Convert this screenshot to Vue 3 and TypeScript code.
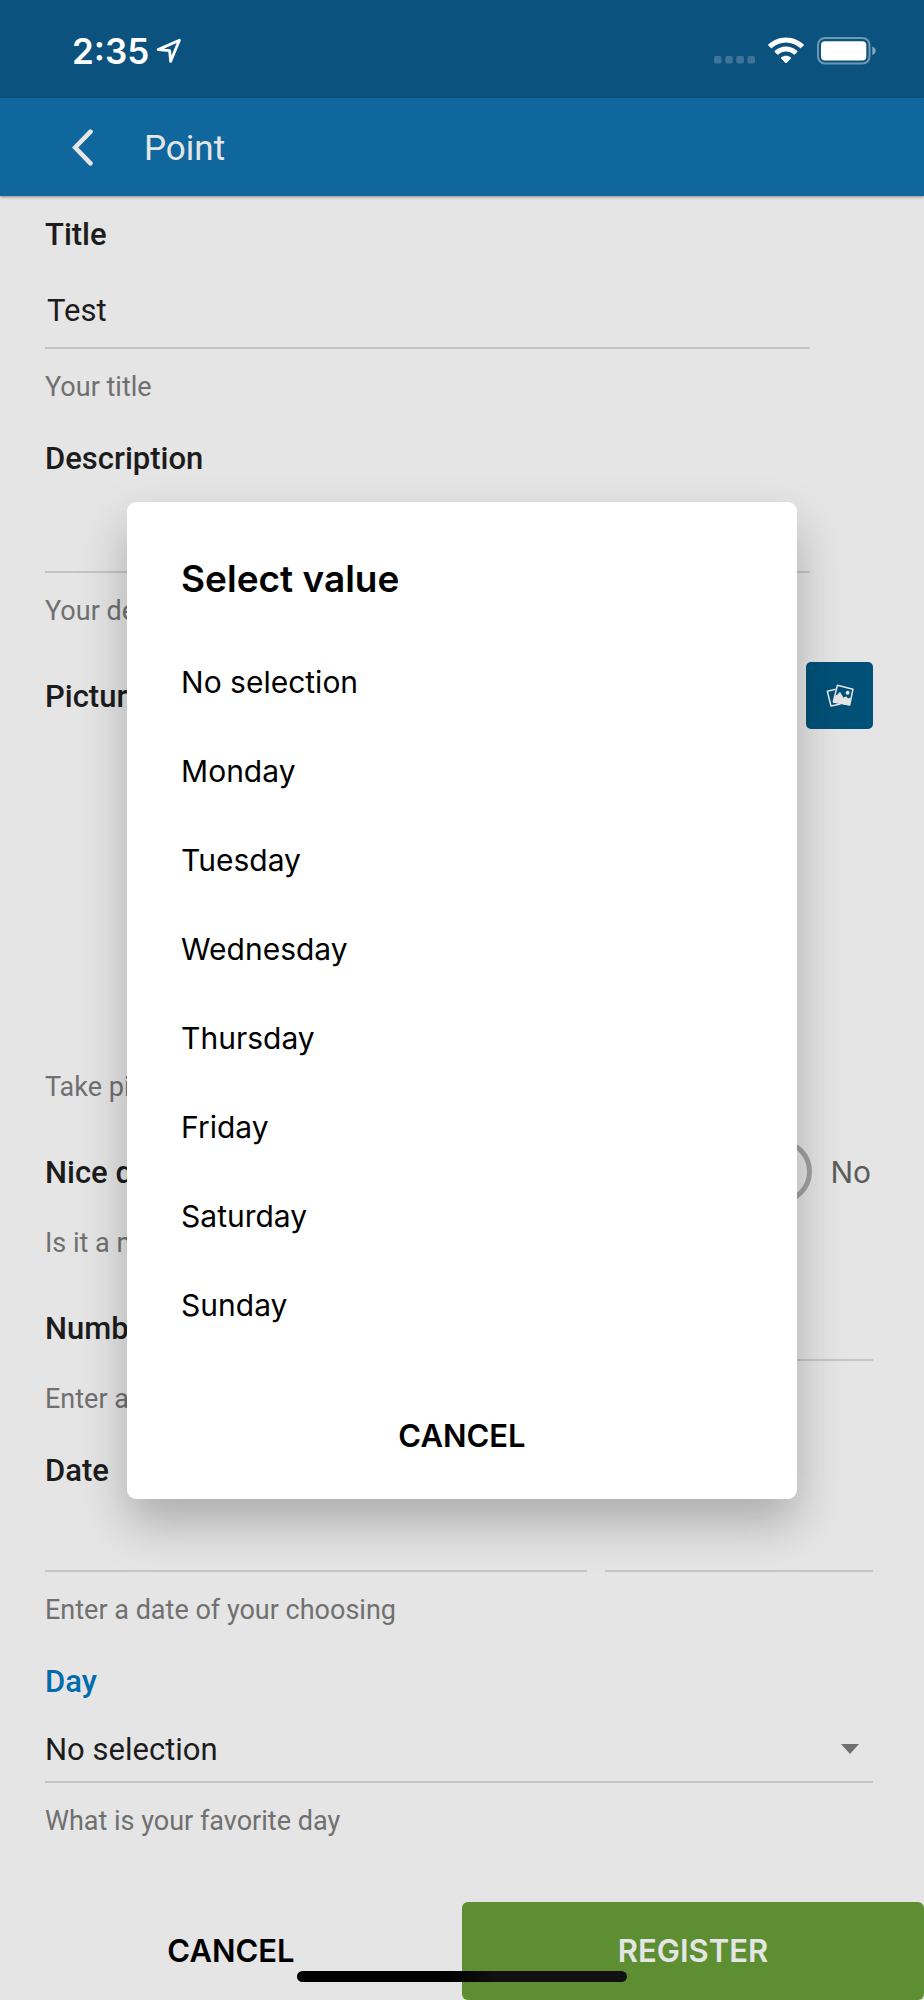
<script setup lang="ts">
import { ref } from 'vue'

const title = ref('Test')
const description = ref('')
const niceDay = ref(false)
const amount = ref('')
const date = ref('')
const time = ref('')
const day = ref('No selection')
const dialogOpen = ref(true)

const options: string[] = [
  'No selection',
  'Monday',
  'Tuesday',
  'Wednesday',
  'Thursday',
  'Friday',
  'Saturday',
  'Sunday',
]

function choose(option: string): void {
  day.value = option
  dialogOpen.value = false
}
</script>

<template>
  <div class="screen">
    <div class="status-bar">
      <span class="clock">2:35</span>
      <svg class="location" width="26" height="26" viewBox="0 0 26 26" aria-hidden="true">
        <path d="M2.2 11.6 L23.4 2.2 L14.6 23.4 L13.6 12.6 Z" fill="none" stroke="#fff" stroke-width="2.8" stroke-linejoin="round" />
      </svg>
      <div class="indicators">
        <svg width="41" height="27" viewBox="0 0 41 27" aria-hidden="true">
          <g fill="#3f7498">
            <rect x="0" y="19" width="7.6" height="7.6" rx="2" />
            <rect x="11.2" y="19" width="7.6" height="7.6" rx="2" />
            <rect x="22.3" y="19" width="7.6" height="7.6" rx="2" />
            <rect x="33.4" y="19" width="7.6" height="7.6" rx="2" />
          </g>
        </svg>
        <svg width="36" height="27" viewBox="0 0 36 27" aria-hidden="true">
          <g fill="#fff">
            <path d="M18 0.4 C11 0.4 4.800 3.200 0.300 7.500 Q-0.100 8 0.300 8.500 L2.900 11.100 Q3.400 11.600 3.900 11.100 C7.700 7.600 12.600 5.500 18 5.500 S28.300 7.600 32.100 11.100 Q32.600 11.600 33.100 11.100 L35.700 8.500 Q36.100 8 35.700 7.500 C31.200 3.200 25 0.400 18 0.400 Z" />
            <path d="M18 9.500 C13.700 9.500 9.800 11.100 6.700 13.900 Q6.200 14.400 6.700 14.900 L9.300 17.500 Q9.800 17.900 10.300 17.500 C12.400 15.700 15.100 14.600 18 14.600 S23.600 15.700 25.700 17.500 Q26.200 17.900 26.700 17.500 L29.300 14.900 Q29.800 14.400 29.300 13.900 C26.200 11.100 22.300 9.500 18 9.500 Z" />
            <path d="M18 18.700 C16.200 18.700 14.500 19.300 13.100 20.400 Q12.600 20.900 13.100 21.400 L17.500 25.900 Q18 26.300 18.500 25.900 L22.900 21.400 Q23.400 20.900 22.900 20.400 C21.500 19.300 19.800 18.700 18 18.700 Z" />
          </g>
        </svg>
        <svg width="59" height="28" viewBox="0 0 59 28" aria-hidden="true">
          <rect x="1" y="1" width="51.500" height="25.500" rx="7" fill="none" stroke="#6d97b2" stroke-width="2" />
          <rect x="4" y="4.200" width="45.300" height="19.200" rx="4" fill="#fff" />
          <path d="M55.300 9.500 C57.500 10.300 58.700 12 58.700 13.800 S57.500 17.300 55.300 18.100 Z" fill="#85a8be" />
        </svg>
      </div>
    </div>

    <header class="app-bar">
      <button class="back" type="button" aria-label="Back">
        <svg width="22" height="37" viewBox="0 0 22 37" aria-hidden="true">
          <path d="M18.500 2.700 L3.200 18.500 L18.500 34.300" fill="none" stroke="#e5e5e5" stroke-width="4.600" stroke-linecap="round" stroke-linejoin="miter" />
        </svg>
      </button>
      <h1>Point</h1>
    </header>

    <form class="form" @submit.prevent>
      <div class="field">
        <label class="label" for="title">Title</label>
        <input id="title" v-model="title" class="line-input text" type="text" />
        <p class="hint">Your title</p>
      </div>

      <div class="field">
        <label class="label" for="description">Description</label>
        <input id="description" v-model="description" class="line-input text" type="text" />
        <p class="hint">Your description</p>
      </div>

      <div class="field compact">
        <div class="row">
          <span class="label">Pictures</span>
          <button class="picture-button" type="button" aria-label="Add pictures">
            <svg width="28" height="24" viewBox="0 0 28 24" aria-hidden="true">
              <path d="M9.500 5.200 L1.300 7.300 L5 22 L14.500 19.900" fill="none" stroke="#e5e5e5" stroke-width="1.500" stroke-linejoin="round" />
              <path d="M11.400 1.300 L27 5.200 L23.700 21 L7.300 18 Z" fill="#005077" stroke="#e5e5e5" stroke-width="1.500" stroke-linejoin="round" />
              <path d="M7 18.500 L9.300 11.400 L11.500 10.400 L14 7.800 L17.500 13.700 L20 12.300 L22 14.500 L24.500 13.500 L23.700 21.200 Z" fill="#e5e5e5" />
              <circle cx="21.600" cy="8.700" r="2" fill="#e5e5e5" />
            </svg>
          </button>
        </div>
        <div class="gallery"></div>
        <p class="hint">Take pictures</p>
      </div>

      <div class="field compact">
        <div class="row">
          <label class="label" for="nice">Nice day</label>
          <div class="switch">
            <input id="nice" v-model="niceDay" type="checkbox" />
            <span class="switch-text">No</span>
          </div>
        </div>
        <p class="hint">Is it a nice day</p>
      </div>

      <div class="field compact">
        <div class="row">
          <label class="label" for="number">Number</label>
          <input id="number" v-model="amount" class="line-input number" type="text" inputmode="numeric" />
        </div>
        <p class="hint">Enter a number</p>
      </div>

      <div class="field">
        <label class="label" for="date">Date</label>
        <div class="date-row">
          <input id="date" v-model="date" class="line-input" type="text" />
          <input v-model="time" class="line-input" type="text" aria-label="Time" />
        </div>
        <p class="hint">Enter a date of your choosing</p>
      </div>

      <div class="field">
        <label class="label active" for="day">Day</label>
        <div class="select-wrap">
          <select id="day" v-model="day" @mousedown.prevent="dialogOpen = true">
            <option v-for="option in options" :key="option">{{ option }}</option>
          </select>
          <svg width="18" height="10" viewBox="0 0 18 10" aria-hidden="true">
            <path d="M0 0 H18 L9 10 Z" fill="#707070" />
          </svg>
        </div>
        <p class="hint">What is your favorite day</p>
      </div>
    </form>

    <footer class="footer">
      <button class="action" type="button">CANCEL</button>
      <button class="action primary" type="button">REGISTER</button>
      <span class="home-indicator"></span>
    </footer>

    <div v-if="dialogOpen" class="overlay">
      <section class="dialog" role="dialog" aria-modal="true" aria-labelledby="dialog-title">
        <h2 id="dialog-title">Select value</h2>
        <ul>
          <li v-for="option in options" :key="option">
            <button class="option" type="button" @click="choose(option)">{{ option }}</button>
          </li>
        </ul>
        <button class="action" type="button" @click="dialogOpen = false">CANCEL</button>
      </section>
    </div>
  </div>
</template>

<style>
html,
body {
  background: #e5e5e5;
}
</style>

<style scoped>
* {
  box-sizing: border-box;
}

.screen {
  position: relative;
  display: flex;
  flex-direction: column;
  min-height: 100vh;
  background: #e5e5e5;
  color: #1c1c1c;
  font-family: Roboto, "Liberation Sans", sans-serif;
}

button,
input,
select {
  margin: 0;
  padding: 0;
  border: 0;
  border-radius: 0;
  outline: 0;
  background: none;
  color: inherit;
  font: inherit;
  appearance: none;
}

h1,
h2,
p,
ul {
  margin: 0;
  padding: 0;
}

svg {
  display: block;
  flex: none;
}

.status-bar {
  display: flex;
  align-items: center;
  height: 98px;
  padding: 3px 48px 0 72px;
  background: #0b527e;
  color: #fff;
}

.clock {
  font: 600 35px/42px Inter, sans-serif;
}

.location {
  margin-left: 7px;
}

.indicators {
  display: flex;
  align-items: center;
  gap: 13px;
  margin-left: auto;
}

.app-bar {
  display: flex;
  align-items: center;
  gap: 50px;
  height: 98px;
  padding-left: 72px;
  background: #10679d;
  box-shadow: 0 1px 3px rgba(0, 0, 0, 0.4);
  color: #e5e5e5;
}

h1 {
  padding-top: 4px;
  font-size: 35px;
  font-weight: 400;
  line-height: 42px;
}

.form {
  flex: 1;
  padding: 21px 51px 65px 45px;
}

.field + .field {
  margin-top: 38px;
}

.field + .field.compact {
  margin-top: 35px;
}

.label {
  display: block;
  font-size: 31px;
  font-weight: 500;
  line-height: 36px;
}

.row .label {
  padding-top: 2px;
}

.label.active {
  color: #006cad;
}

.hint {
  margin-top: 22px;
  color: #707070;
  font-size: 27px;
  line-height: 32px;
}

.line-input {
  display: block;
  width: 100%;
  min-width: 0;
  height: 76px;
  padding: 0 2px;
  border-bottom: 2px solid #c6c6c6;
  font-size: 31px;
}

.line-input.text {
  width: calc(100% - 63px);
  margin-top: 20px;
}

.line-input.number {
  flex: 1;
  height: 67px;
}

.row {
  display: flex;
  align-items: center;
  justify-content: space-between;
  gap: 36px;
  height: 67px;
}

.picture-button {
  display: grid;
  place-items: center;
  width: 67px;
  height: 67px;
  border-radius: 5px;
  background: #005077;
}

.gallery {
  height: 320px;
}

.switch {
  display: flex;
  align-items: center;
  gap: 18px;
  padding-right: 2px;
}

.switch input {
  width: 112px;
  height: 65px;
  border: 5px solid #a2a2a2;
  border-radius: 33px;
}

.switch-text {
  color: #5c5c5c;
  font: 400 30px/36px Inter, sans-serif;
}

.date-row {
  display: grid;
  grid-template-columns: 2.02fr 1fr;
  gap: 18px;
  margin-top: 7px;
}

.select-wrap {
  display: flex;
  align-items: center;
  height: 66px;
  margin-top: 17px;
  padding-right: 14px;
  border-bottom: 2px solid #c6c6c6;
}

select {
  flex: 1;
  height: 64px;
  font-size: 31px;
}

.footer {
  position: relative;
  display: grid;
  grid-template-columns: 1fr 1fr;
}

.action {
  height: 98px;
  border-radius: 6px;
  color: #000;
  font: 600 31px/36px Inter, sans-serif;
}

.action.primary {
  background: #5d8f32;
  color: #e5e5e5;
}

.home-indicator {
  position: absolute;
  bottom: 18px;
  left: 50%;
  width: 330px;
  height: 11px;
  margin-left: -165px;
  border-radius: 6px;
  background: linear-gradient(90deg, #000 45%, #111 60%);
}

.overlay {
  position: absolute;
  inset: 0;
  display: flex;
  align-items: center;
  justify-content: center;
}

.dialog {
  display: flex;
  flex-direction: column;
  width: 72.5%;
  padding: 53px 0 14px;
  border-radius: 9px;
  background: #fff;
  box-shadow: 0 24px 48px rgba(0, 0, 0, 0.25);
  color: #000;
  font-family: Inter, sans-serif;
}

h2 {
  padding: 0 54px;
  font-size: 37px;
  font-weight: 600;
  line-height: 48px;
}

ul {
  margin: 35px 0 37px;
  list-style: none;
}

.option {
  display: block;
  width: 100%;
  height: 89px;
  padding: 0 54px;
  font-size: 30px;
  text-align: left;
}
</style>
